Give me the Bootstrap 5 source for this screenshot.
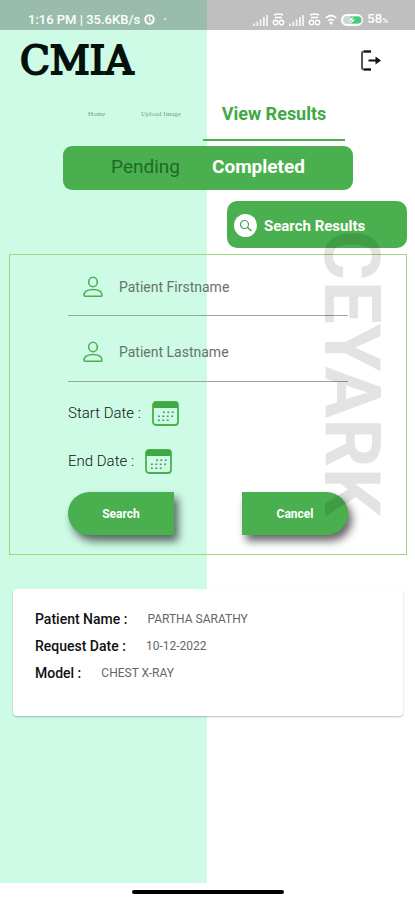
<!DOCTYPE html>
<html lang="en">
<head>
<meta charset="utf-8">
<meta name="viewport" content="width=device-width, initial-scale=1">
<title>CMIA – View Results</title>
<link href="https://cdn.jsdelivr.net/npm/bootstrap@5.3.0/dist/css/bootstrap.min.css" rel="stylesheet">
<style>
  :root { --leaf: #4ab04f; --leaf-ink: #3fa945; --mint: #cdfbe6; }
  body { font-family: Roboto, "Liberation Sans", sans-serif; color: #222; line-height: 20px; }
  .screen { background: linear-gradient(90deg, var(--mint) 50%, #fff 50%); }
  .statusbar { height: 30px; padding: 9px 27px 0 28px; background: rgba(0,0,0,.25); color: #fff; font-size: 13px; font-weight: 500; line-height: 20px; }
  .statusbar svg { display: block; }
  .statusbar .pct small { font-size: 8px; }
  .brandbar { padding: 8px 33px 0 20px; height: 60px; }
  .wordmark { font-family: "DejaVu Serif", serif; font-size: 39px; line-height: 46px; color: #06100b; -webkit-text-stroke: 2px #06100b; }
  .mainnav { height: 51px; padding-left: 88px; }
  .mainnav a { font-family: "Liberation Serif", serif; font-size: 7px; line-height: 48px; color: #7a9c8d; text-decoration: none; }
  .mainnav a.first { width: 53px; }
  .mainnav a.second { width: 62px; }
  .mainnav a.current { font-family: Roboto, sans-serif; width: 142px; font-size: 18px; font-weight: 700; color: var(--leaf-ink); border-bottom: 2px solid var(--leaf); text-align: center; }
  .segment { margin: 5px 62px 0 63px; height: 44px; background: var(--leaf); border-radius: 9px; gap: 32px; padding-bottom: 2px; }
  .segment button { font-size: 19px; color: #1d6a26; background: none; border: 0; padding: 0; }
  .segment button.active { color: #fff; font-weight: 700; }
  .results-btn { width: 180px; height: 47px; margin: 11px 8px 6px auto; padding: 2px 7px 0; gap: 7px; border: 0; border-radius: 10px; background: var(--leaf); color: #fff; font-size: 15px; font-weight: 700; }
  .filter { margin: 0 8px 0 9px; border: 1px solid #a5d47e; padding: 0 58px 19px; }
  .field { height: 61px; border-bottom: 1px solid #9aa5a0; padding: 3px 0 0 14px; gap: 15px; }
  .field + .field { height: 66px; padding-top: 6px; }
  .field input { min-width: 0; border: 0; background: none; padding: 0; font-size: 14px; color: #333; outline: 0; }
  .field input::placeholder { color: #66736d; opacity: 1; }
  .pick { height: 26px; gap: 11px; font-size: 15px; font-weight: 300; color: #111; margin-bottom: 22px; }
  .pick.start { margin-top: 18px; }
  .pick button, .exit { background: none; border: 0; padding: 0; }
  .pick svg, .exit svg, .field svg { display: block; }
  .action { width: 106px; height: 43px; border: 0; background: var(--leaf); color: #fff; font-size: 12px; font-weight: 700; box-shadow: 4px 6px 8px rgba(0,0,0,.6); }
  .action.go { border-radius: 22px 0 0 22px; }
  .action.stop { border-radius: 0 22px 22px 0; }
  .actions { margin-top: -4px; }
  .watermark { position: absolute; right: 26px; top: 230px; writing-mode: vertical-rl; font-size: 77px; line-height: 76px; font-weight: 700; color: rgba(0,0,0,.11); pointer-events: none; }
  .record { margin: 34px 12px 0 13px; padding: 20px 22px 0; height: 127px; background: #fff; border-radius: 4px; box-shadow: 0 1px 2px rgba(0,0,0,.25); font-size: 14px; }
  .record dl > div { margin-bottom: 7px; gap: 20px; }
  .record dt { font-weight: 500; color: #111; }
  .record dd { margin: 0; font-size: 12px; color: #666; }
  .homebar { height: 17px; }
  .homebar span { width: 152px; height: 4px; border-radius: 2px; background: #000; }
</style>
</head>
<body class="min-vh-100 d-flex flex-column bg-white">
<svg class="d-none" aria-hidden="true">
  <symbol id="person" viewBox="0 0 20 22"><g fill="none" stroke="#4ab04f" stroke-width="1.6"><ellipse cx="10" cy="6" rx="4.3" ry="4.7"/><path d="M1 19.2c0-3.8 4-5.7 9-5.7s9 1.900 9 5.700c0 .7-.4 1-1 1H2c-.6 0-1-.3-1-1z"/></g></symbol>
  <symbol id="calendar" viewBox="0 0 27 25"><rect x="1" y="1" width="25" height="23" rx="3" fill="none" stroke="#4ab04f" stroke-width="1.800"/><path d="M1 7V4a3 3 0 0 1 3-3h19a3 3 0 0 1 3 3v3z" fill="#3fa945"/><path d="M11 11.300h12M6 15.300h16M6 19.300h12" fill="none" stroke="#4b8d5d" stroke-width="1.500" stroke-dasharray="1.800 2.600"/></symbol>
  <symbol id="signal" viewBox="0 0 15 12"><path d="M1 12V9.500M4.300 12V7.500M7.600 12V5.500M10.900 12V3M14 12V1" stroke="#fff" stroke-width="1.600" opacity=".9"/></symbol>
  <symbol id="volte" viewBox="0 0 13 13"><path d="M2 2Q6.500 0 11 2M3 4.500h7" fill="none" stroke="#fff" stroke-width="1.500"/><circle cx="3.500" cy="9.500" r="2.200" fill="none" stroke="#fff" stroke-width="1.400"/><circle cx="9.500" cy="9.500" r="2.200" fill="none" stroke="#fff" stroke-width="1.400"/></symbol>
</svg>

<div class="screen position-relative flex-grow-1">
  <div class="statusbar d-flex justify-content-between">
    <div class="d-flex align-items-center gap-1">
      <span>1:16 PM | 35.6KB/s</span>
      <svg width="11" height="11" viewBox="0 0 11 11"><circle cx="5.500" cy="5.500" r="4.200" fill="none" stroke="#fff" stroke-width="2"/><path d="M5.500 3v3l2 1" fill="none" stroke="#fff" stroke-width="1.200"/></svg>
      <span class="ps-1">·</span>
    </div>
    <div class="d-flex align-items-center gap-1">
      <svg width="15" height="12"><use href="#signal"/></svg>
      <svg width="13" height="13"><use href="#volte"/></svg>
      <svg width="15" height="12"><use href="#signal"/></svg>
      <svg width="13" height="13"><use href="#volte"/></svg>
      <svg width="12" height="11" viewBox="0 0 12 11"><path d="M.7 4Q6-1 11.300 4M3 6.700q3-2.700 6 0" fill="none" stroke="#fff" stroke-width="1.700"/><circle cx="6" cy="9" r="1.500" fill="#fff"/></svg>
      <svg width="22" height="12" viewBox="0 0 22 12"><rect x="1" y="1" width="20" height="10" rx="5" fill="#cfd6d0" stroke="#fff" stroke-width="2"/><path d="M10 2.500h7a3.500 3.500 0 0 1 0 7h-7z" fill="#43cf78"/><path d="M12.500 2 8 6.500h3L9.500 10 14 5.500h-3z" fill="#fff"/></svg>
      <span class="pct">58<small>%</small></span>
    </div>
  </div>

  <header class="brandbar d-flex justify-content-between align-items-start">
    <span class="wordmark">CMIA</span>
    <button class="exit mt-2 pt-1" type="button" aria-label="Log out">
      <svg width="22" height="21" viewBox="0 0 22 21" fill="none"><path d="M11 1.500H4Q2 1.500 2 3.500v14q0 2 2 2h7" stroke="#555" stroke-width="2"/><path d="M4 1.500h7M4 19.500h7M8.500 10.500H18" stroke="#111" stroke-width="2"/><path d="m15.500 6.500 5.500 4-5.500 4z" fill="#111"/></svg>
    </button>
  </header>

  <nav class="mainnav d-flex">
    <a class="first" href="#">Home</a>
    <a class="second" href="#">Upload Image</a>
    <a class="current" href="#" aria-current="page">View Results</a>
  </nav>

  <main>
    <div class="segment d-flex justify-content-center align-items-center">
      <button type="button">Pending</button>
      <button type="button" class="active">Completed</button>
    </div>

    <button type="button" class="results-btn d-flex align-items-center">
      <svg width="23" height="23" viewBox="0 0 23 23"><circle cx="11.500" cy="11.500" r="11.500" fill="#fff"/><circle cx="10.500" cy="10.500" r="4" fill="none" stroke="#4b9a58" stroke-width="1.200"/><path d="m13.500 13.500 4 3.500" stroke="#4b9a58" stroke-width="1.500"/></svg>
      Search Results
    </button>

    <form class="filter">
      <div class="field d-flex align-items-center">
        <label for="first"><svg width="22" height="22"><use href="#person"/></svg></label>
        <input class="flex-grow-1" id="first" type="text" placeholder="Patient Firstname" aria-label="Patient Firstname">
      </div>
      <div class="field d-flex align-items-center">
        <label for="last"><svg width="22" height="22"><use href="#person"/></svg></label>
        <input class="flex-grow-1" id="last" type="text" placeholder="Patient Lastname" aria-label="Patient Lastname">
      </div>
      <div class="pick start d-flex align-items-center">
        <label for="start">Start Date :</label>
        <button id="start" type="button"><svg width="27" height="25"><use href="#calendar"/></svg></button>
      </div>
      <div class="pick d-flex align-items-center">
        <label for="end">End Date :</label>
        <button id="end" type="button"><svg width="27" height="25"><use href="#calendar"/></svg></button>
      </div>
      <div class="actions d-flex justify-content-between">
        <button class="action go" type="button">Search</button>
        <button class="action stop" type="button">Cancel</button>
      </div>
    </form>

    <section class="record">
      <dl class="mb-0">
        <div class="d-flex"><dt>Patient Name :</dt><dd>PARTHA SARATHY</dd></div>
        <div class="d-flex"><dt>Request Date :</dt><dd>10-12-2022</dd></div>
        <div class="d-flex"><dt>Model :</dt><dd>CHEST X-RAY</dd></div>
      </dl>
    </section>
  </main>
  <div class="watermark" aria-hidden="true">CEYARK</div>
</div>
<div class="homebar d-flex justify-content-center align-items-center"><span></span></div>
<script src="https://cdn.jsdelivr.net/npm/bootstrap@5.3.0/dist/js/bootstrap.bundle.min.js"></script>
</body>
</html>
